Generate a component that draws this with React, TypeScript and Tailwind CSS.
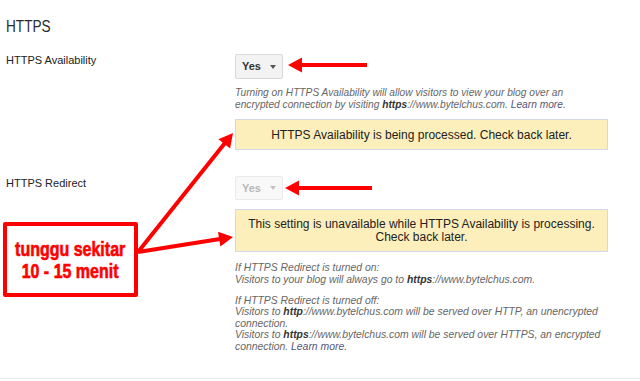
import React from "react";

type Pt = [number, number];

function head(tip: Pt, from: Pt, len = 14, half = 7.5) {
  const dx = tip[0] - from[0];
  const dy = tip[1] - from[1];
  const d = Math.hypot(dx, dy);
  const ux = dx / d;
  const uy = dy / d;
  const bx = tip[0] - ux * len;
  const by = tip[1] - uy * len;
  const p1 = [bx - uy * half, by + ux * half];
  const p2 = [bx + uy * half, by - ux * half];
  return `${tip[0]},${tip[1]} ${p1[0]},${p1[1]} ${p2[0]},${p2[1]}`;
}

function Arrow({ from, to, width = 4 }: { from: Pt; to: Pt; width?: number }) {
  const dx = to[0] - from[0];
  const dy = to[1] - from[1];
  const d = Math.hypot(dx, dy);
  const end: Pt = [to[0] - (dx / d) * 10, to[1] - (dy / d) * 10];
  return (
    <g>
      <line x1={from[0]} y1={from[1]} x2={end[0]} y2={end[1]} stroke="#ff0000" strokeWidth={width} />
      <polygon points={head(to, from)} fill="#ff0000" />
    </g>
  );
}

function Select({ disabled }: { disabled?: boolean }) {
  return (
    <div
      className={
        "flex w-[48px] items-center justify-center gap-[9px] rounded-[2px] border text-[11px] font-bold " +
        (disabled
          ? "h-[24px] border-[#ebebeb] bg-[#f8f8f8] text-[#b8b8b8]"
          : "h-[25px] border-[#d9d9d9] bg-[#f3f3f3] text-[#333]")
      }
    >
      <span>Yes</span>
      <span
        className={
          "h-0 w-0 border-x-[3.5px] border-t-[4px] border-x-transparent " +
          (disabled ? "border-t-[#c4c4c4]" : "border-t-[#555]")
        }
      />
    </div>
  );
}

export default function App() {
  return (
    <div className="relative h-[381px] w-[640px] overflow-hidden bg-white font-['Liberation_Sans',Arial,sans-serif] text-[#222]">
      <div className="px-[6px] pt-[17px]">
        <h2 className="h-[20px] text-[16px] leading-[20px] font-normal text-[#2a2a2a]">
          <span className="inline-block origin-left scale-x-[0.85] whitespace-nowrap">HTTPS</span>
        </h2>

        <div className="mt-[17px] flex">
          <div className="w-[229px] text-[11px] leading-[13px]">HTTPS Availability</div>
          <div className="w-[373px]">
            <Select />
            <p className="mt-[8px] text-[10.2px] leading-[11.6px] text-[#666] italic">
              <span className="block whitespace-nowrap">
                Turning on HTTPS Availability will allow visitors to view your blog over an
              </span>
              <span className="block whitespace-nowrap">
                encrypted connection by visiting <b className="text-[#333]">https</b>://www.bytelchus.com.{" "}
                <span className="text-[#557]">Learn more.</span>
              </span>
            </p>
            <div className="mt-[9px] flex h-[31px] items-center justify-center border border-[#d4d7e6] bg-[#fdefbb] text-[12px] text-[#222]">
              HTTPS Availability is being processed. Check back later.
            </div>
          </div>
        </div>

        <div className="mt-[26px] flex">
          <div className="w-[229px] pt-[1px] text-[11px] leading-[13px]">HTTPS Redirect</div>
          <div className="w-[373px]">
            <Select disabled />
            <div className="mt-[9px] flex h-[43px] flex-col items-center justify-center border border-[#d4d7e6] bg-[#fdefbb] text-[12px] leading-[13px] text-[#222]">
              <span>This setting is unavailable while HTTPS Availability is processing.</span>
              <span>Check back later.</span>
            </div>
            <div className="mt-[10px] text-[10.4px] leading-[11.5px] text-[#666] italic">
              <p>
                <span className="block whitespace-nowrap">If HTTPS Redirect is turned on:</span>
                <span className="block whitespace-nowrap">
                  Visitors to your blog will always go to <b className="text-[#333]">https</b>://www.bytelchus.com.
                </span>
              </p>
              <p className="mt-[9.5px]">
                <span className="block whitespace-nowrap">If HTTPS Redirect is turned off:</span>
                <span className="block whitespace-nowrap">
                  Visitors to <b className="text-[#333]">http</b>://www.bytelchus.com will be served over HTTP, an unencrypted
                </span>
                <span className="block whitespace-nowrap">connection.</span>
                <span className="block whitespace-nowrap">
                  Visitors to <b className="text-[#333]">https</b>://www.bytelchus.com will be served over HTTPS, an encrypted
                </span>
                <span className="block whitespace-nowrap">
                  connection. <span className="text-[#557]">Learn more.</span>
                </span>
              </p>
            </div>
          </div>
        </div>
      </div>

      <div className="absolute bottom-[2px] left-0 right-0 border-t border-[#ececec]" />

      <div className="absolute left-[3px] top-[222px] flex h-[75px] w-[135px] flex-col items-center justify-center rounded-[2px] border-[4px] border-[#ff0000] bg-white text-[19.5px] leading-[22px] font-bold text-[#ff0000] [-webkit-text-stroke:0.6px_#ff0000]">
        <span className="inline-block scale-x-[0.82] whitespace-nowrap">tunggu sekitar</span>
        <span className="inline-block scale-x-[0.82] whitespace-nowrap">10 - 15 menit</span>
      </div>

      <svg className="pointer-events-none absolute inset-0" width="640" height="381">
        <Arrow from={[367, 65]} to={[288, 65]} />
        <Arrow from={[372, 188]} to={[285, 188]} />
        <Arrow from={[138, 252]} to={[233, 133]} />
        <Arrow from={[138, 252]} to={[233, 237]} />
      </svg>
    </div>
  );
}
